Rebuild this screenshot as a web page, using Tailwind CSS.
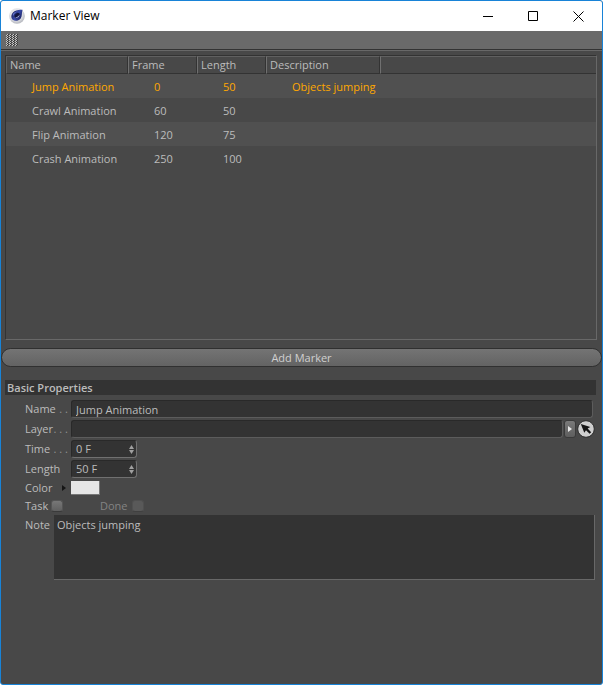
<!DOCTYPE html>
<html lang="en">
<head>
    <meta charset="UTF-8">
    <meta name="viewport" content="width=device-width, initial-scale=1.0">
    <title>Marker View</title>
    <script src="https://cdn.jsdelivr.net/npm/@tailwindcss/browser@4"></script>
</head>
<body class="bg-white font-['Open_Sans','Noto_Sans',sans-serif] text-[11px] leading-4 text-[#bcbcbc]">
    <div class="flex flex-col min-h-screen rounded-[3px] overflow-hidden border border-[#1883d7] bg-[#484848]">

        <!-- Title bar -->
        <header class="flex items-center h-[30px] bg-white text-black pl-2 pr-[18px]">
            <svg class="w-4 h-4 mr-[5px]" viewBox="0 0 16 16">
                <defs>
                    <radialGradient id="rim" cx="45%" cy="40%" r="60%">
                        <stop offset="0.6" stop-color="#e4e5e9"/>
                        <stop offset="1" stop-color="#b4b6bd"/>
                    </radialGradient>
                    <linearGradient id="ball" x1="0" y1="0.2" x2="1" y2="0.8">
                        <stop offset="0" stop-color="#141a52"/>
                        <stop offset="0.5" stop-color="#3a4cab"/>
                        <stop offset="1" stop-color="#161c58"/>
                    </linearGradient>
                </defs>
                <circle cx="8" cy="8" r="7.8" fill="url(#rim)"/>
                <path d="M13.500 1.800C10 1.400 6 2.200 4 4.400 1.800 6.800 1.900 10 3.800 11.800 6 13.700 9.700 12.900 11.700 10.500 13.400 8.300 12.500 5 13.500 1.800Z" fill="url(#ball)"/>
                <ellipse cx="8.300" cy="7.600" rx="3" ry="2.300" transform="rotate(-40 8.300 7.600)" fill="#10153f"/>
                <path d="M6.200 9.300C8 9.500 10 8 10.400 6.200 11.200 8.400 8.500 11 6.200 9.300Z" fill="#a9b5ec"/>
                <path d="M3.600 7C4.200 4.900 6.500 3.400 9 3.200 6.800 4.200 4.900 5.400 4.400 7.800Z" fill="#6f80d4"/>
            </svg>
            <h1 class="flex-1 text-xs">Marker View</h1>
            <div class="flex gap-[34px]">
                <button type="button" aria-label="Minimize">
                    <svg class="block w-[11px] h-[11px]" viewBox="0 0 11 11" fill="none" stroke="#000"><path d="M0 5.500H10"/></svg>
                </button>
                <button type="button" aria-label="Maximize">
                    <svg class="block w-[11px] h-[11px]" viewBox="0 0 11 11" fill="none" stroke="#000"><path d="M.5.5H9.500V9.500H.5Z"/></svg>
                </button>
                <button type="button" aria-label="Close">
                    <svg class="block w-[11px] h-[11px]" viewBox="0 0 11 11" fill="none" stroke="#000"><path d="M.5.5L10.500 10.500M10.500.5L.5 10.500"/></svg>
                </button>
            </div>
        </header>

        <!-- Toolbar with drag grip -->
        <div class="flex items-center h-[19px] bg-[#6a6a6a] border-b border-[#333] pl-[5px]">
            <svg class="w-3 h-3" viewBox="0 0 12 12">
                <defs>
                    <pattern id="grip" width="3" height="2" patternUnits="userSpaceOnUse">
                        <path d="M1 0h1v1h-1zM0 1h1v1h-1z" fill="#c8c8c8"/>
                        <path d="M2 0h1v1h-1zM1 1h1v1h-1z" fill="#3a3a3a"/>
                    </pattern>
                </defs>
                <rect width="12" height="12" fill="url(#grip)"/>
            </svg>
        </div>
        <div class="h-px bg-[#686868]"></div>

        <!-- Marker list -->
        <div class="mt-1 ml-1 mr-[5px] h-[285px] border border-t-[#333] border-l-[#333] border-r-[#686868] border-b-[#686868]">
            <table class="w-full table-fixed border-separate border-spacing-0 text-left">
                <colgroup>
                    <col class="w-[122px]">
                    <col class="w-[69px]">
                    <col class="w-[69px]">
                    <col class="w-[114px]">
                    <col>
                </colgroup>
                <thead>
                    <tr class="h-[17px] whitespace-nowrap">
                        <th class="p-0 pl-[3px] font-normal border-t border-l border-t-[#606060] border-l-[#606060] border-b border-b-[#333] border-r border-r-[#333]">Name</th>
                        <th class="p-0 pl-[3px] font-normal border-t border-l border-t-[#606060] border-l-[#707070] border-b border-b-[#333] border-r border-r-[#333]">Frame</th>
                        <th class="p-0 pl-[3px] font-normal border-t border-l border-t-[#606060] border-l-[#707070] border-b border-b-[#333] border-r border-r-[#333]">Length</th>
                        <th class="p-0 pl-[3px] font-normal border-t border-l border-t-[#606060] border-l-[#707070] border-b border-b-[#333] border-r border-r-[#333]">Description</th>
                        <th class="p-0 border-t border-l border-t-[#606060] border-l-[#707070] border-b border-b-[#333]"></th>
                    </tr>
                </thead>
                <tbody class="whitespace-nowrap">
                    <tr class="h-6 bg-[#505050] text-[#ffa800]">
                        <td class="p-0 pt-0.5 pl-[26px]">Jump Animation</td>
                        <td class="p-0 pt-0.5 pl-[26px]">0</td>
                        <td class="p-0 pt-0.5 pl-[26px]">50</td>
                        <td class="p-0 pt-0.5 pl-[26px]">Objects jumping</td>
                        <td></td>
                    </tr>
                    <tr class="h-6">
                        <td class="p-0 pt-0.5 pl-[26px]">Crawl Animation</td>
                        <td class="p-0 pt-0.5 pl-[26px]">60</td>
                        <td class="p-0 pt-0.5 pl-[26px]">50</td>
                        <td></td>
                        <td></td>
                    </tr>
                    <tr class="h-6 bg-[#505050]">
                        <td class="p-0 pt-0.5 pl-[26px]">Flip Animation</td>
                        <td class="p-0 pt-0.5 pl-[26px]">120</td>
                        <td class="p-0 pt-0.5 pl-[26px]">75</td>
                        <td></td>
                        <td></td>
                    </tr>
                    <tr class="h-6">
                        <td class="p-0 pt-0.5 pl-[26px]">Crash Animation</td>
                        <td class="p-0 pt-0.5 pl-[26px]">250</td>
                        <td class="p-0 pt-0.5 pl-[26px]">100</td>
                        <td></td>
                        <td></td>
                    </tr>
                </tbody>
            </table>
        </div>

        <button type="button" class="mt-2 h-[19px] rounded-full border border-[#303030] bg-linear-to-b from-[#747474] to-[#636363] text-[#d0d0d0] leading-[17px]">Add Marker</button>

        <!-- Basic properties -->
        <form class="mt-[13px] ml-1 mr-[6px]">
            <h2 class="h-[15px] leading-[15px] pl-0.5 bg-[#333] font-semibold">Basic Properties</h2>

            <div class="mt-[5px] ml-5 mr-[3px] flex flex-col gap-[2px]">
                <div class="flex items-center h-[18px]">
                    <label for="name" class="flex w-[46px]">Name<span class="ml-auto mr-[3px] text-[#929292] whitespace-pre">. .</span></label>
                    <input id="name" type="text" value="Jump Animation" class="flex-1 min-w-0 h-[18px] px-1 rounded-[3px] bg-[#333] border border-t-[#292929] border-l-[#292929] border-r-[#5c5c5c] border-b-[#5c5c5c]">
                </div>
                <div class="flex items-center h-[18px]">
                    <label for="layer" class="flex w-[46px]">Layer<span class="ml-auto mr-[3px] text-[#929292] whitespace-pre">. . .</span></label>
                    <input id="layer" type="text" class="flex-1 min-w-0 h-[18px] px-1 rounded-[3px] bg-[#333] border border-t-[#292929] border-l-[#292929] border-r-[#5c5c5c] border-b-[#5c5c5c]">
                    <button type="button" aria-label="Layer menu" class="flex items-center justify-center w-3 h-[18px] ml-px rounded-[3px] border border-[#3a3a3a] bg-linear-to-b from-[#7a7a7a] to-[#5e5e5e]">
                        <svg class="w-[4px] h-[6px]" viewBox="0 0 4 6"><path d="M0 0L4 3L0 6Z" fill="#e8e8e8"/></svg>
                    </button>
                    <button type="button" aria-label="Pick layer" class="ml-px -mr-[2px]">
                        <svg class="block w-[18px] h-[18px]" viewBox="0 0 18 18">
                            <circle cx="9" cy="9" r="8.300" fill="#cfcfcf" stroke="#2b2b2b"/>
                            <path d="M3.800 4L13.300 7L10.600 8.600L14.200 12.200L12.600 13.800L9 10.200L7.300 12.800Z" fill="#151515"/>
                        </svg>
                    </button>
                </div>
                <div class="flex items-center h-[18px]">
                    <label for="time" class="flex w-[46px]">Time<span class="ml-auto mr-[3px] text-[#929292] whitespace-pre">. . .</span></label>
                    <div class="flex items-center w-[66px] h-[18px] pr-[2px] rounded-[3px] bg-[#333] border border-t-[#292929] border-l-[#292929] border-r-[#707070] border-b-[#707070]">
                        <input id="time" type="text" value="0 F" class="flex-1 min-w-0 px-1">
                        <svg class="w-[5px] h-[9px]" viewBox="0 0 5 9" fill="#a0a0a0"><path d="M0 4L2.500 0L5 4ZM0 5H5L2.500 9Z"/></svg>
                    </div>
                </div>
                <div class="flex items-center h-[18px]">
                    <label for="length" class="w-[46px]">Length</label>
                    <div class="flex items-center w-[66px] h-[18px] pr-[2px] rounded-[3px] bg-[#333] border border-t-[#292929] border-l-[#292929] border-r-[#707070] border-b-[#707070]">
                        <input id="length" type="text" value="50 F" class="flex-1 min-w-0 px-1">
                        <svg class="w-[5px] h-[9px]" viewBox="0 0 5 9" fill="#a0a0a0"><path d="M0 4L2.500 0L5 4ZM0 5H5L2.500 9Z"/></svg>
                    </div>
                </div>
                <div class="flex items-center h-[16px]">
                    <label for="color" class="flex items-center w-[46px]">Color
                        <svg class="w-[4px] h-[6px] ml-auto mr-[5px]" viewBox="0 0 4 6"><path d="M0 0L4 3L0 6Z" fill="#151515"/></svg>
                    </label>
                    <button id="color" type="button" aria-label="Color" class="w-[29px] h-[14px] bg-[#e6e6e6] border-r border-b border-[#777]"></button>
                </div>
                <div class="flex items-center h-[16px]">
                    <label for="task" class="w-[26px]">Task</label>
                    <input id="task" type="checkbox" class="appearance-none w-3 h-3 rounded-[3px] bg-linear-to-b from-[#777] to-[#606060] border border-[#555] border-b-[#3a3a3a]">
                    <label for="done" class="w-[32px] ml-[37px] text-[#838383]">Done</label>
                    <input id="done" type="checkbox" disabled class="appearance-none w-3 h-3 rounded-[3px] bg-[#595959] border border-[#505050] border-b-[#404040]">
                </div>
            </div>
            <div class="mt-px ml-5 mr-px flex">
                <label for="note" class="w-[29px] pt-0.5">Note</label>
                <textarea id="note" class="flex-1 min-w-0 h-[65px] px-[3px] pt-0.5 leading-4 resize-none bg-[#333] border-r border-b border-[#686868]">Objects jumping</textarea>
            </div>
        </form>
    </div>
</body>
</html>
